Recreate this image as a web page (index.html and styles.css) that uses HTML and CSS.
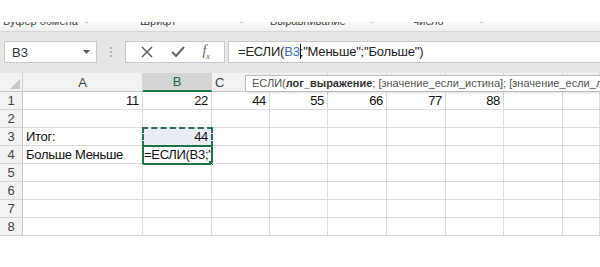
FILE: index.html
```html
<!DOCTYPE html>
<html lang="ru">
<head>
  <meta charset="UTF-8">
  <title>ЕСЛИ</title>
  <link rel="stylesheet" href="styles.css">
</head>
<body>
  <div class="top-gap"></div>

  <div class="group-labels">
    <span class="glabel g1">Буфер обмена</span><span class="launch l1">&#8600;</span>
    <span class="glabel g2">Шрифт</span><span class="launch l2">&#8600;</span>
    <span class="glabel g3">Выравнивание</span><span class="launch l3">&#8600;</span>
    <span class="glabel g4">Число</span><span class="launch l4">&#8600;</span>
  </div>

  <div class="formula-area">
    <div class="name-box">
      <span>B3</span>
      <svg class="dd" width="7" height="4" viewBox="0 0 7 4"><path d="M0 0h7L3.5 4z" fill="#555"/></svg>
    </div>
    <div class="grip"><i></i><i></i><i></i></div>
    <div class="fx-buttons">
      <svg width="14" height="14" viewBox="0 0 14 14"><path d="M2 2l10 10M12 2L2 12" stroke="#666" stroke-width="1.6"/></svg>
      <svg width="16" height="14" viewBox="0 0 16 14"><path d="M2 7l4 4 8-9" stroke="#666" stroke-width="2" fill="none"/></svg>
      <span class="fx">f<sub>x</sub></span>
    </div>
    <div class="formula-input">
      =ЕСЛИ(<span class="ref">B3</span><span class="caret"></span>;"Меньше";"Больше")
    </div>
  </div>

  <div class="sheet">
    <div class="grid">
      <div class="hd corner"><svg width="10" height="10" viewBox="0 0 10 10"><path d="M10 0v10H0z" fill="#c8c8c8"/></svg></div>
      <div class="hd">A</div>
      <div class="hd sel">B</div>
      <div class="hd hd-c">C</div>
      <!-- D..I headers sit under the tooltip -->
      <div class="hd"></div>
      <div class="hd"></div>
      <div class="hd"></div>
      <div class="hd"></div>
      <div class="hd"></div>
      <div class="hd"></div>

      <div class="rh">1</div>
      <div class="c num">11</div><div class="c num">22</div><div class="c num">44</div><div class="c num">55</div>
      <div class="c num">66</div><div class="c num">77</div><div class="c num">88</div><div class="c"></div><div class="c"></div>

      <div class="rh">2</div>
      <div class="c"></div><div class="c"></div><div class="c"></div><div class="c"></div>
      <div class="c"></div><div class="c"></div><div class="c"></div><div class="c"></div><div class="c"></div>

      <div class="rh">3</div>
      <div class="c">Итог:</div><div class="c num copied">44</div><div class="c"></div><div class="c"></div>
      <div class="c"></div><div class="c"></div><div class="c"></div><div class="c"></div><div class="c"></div>

      <div class="rh">4</div>
      <div class="c">Больше Меньше</div><div class="c editing">=ЕСЛИ(B3;"</div><div class="c"></div><div class="c"></div>
      <div class="c"></div><div class="c"></div><div class="c"></div><div class="c"></div><div class="c"></div>

      <div class="rh">5</div>
      <div class="c"></div><div class="c"></div><div class="c"></div><div class="c"></div>
      <div class="c"></div><div class="c"></div><div class="c"></div><div class="c"></div><div class="c"></div>

      <div class="rh">6</div>
      <div class="c"></div><div class="c"></div><div class="c"></div><div class="c"></div>
      <div class="c"></div><div class="c"></div><div class="c"></div><div class="c"></div><div class="c"></div>

      <div class="rh">7</div>
      <div class="c"></div><div class="c"></div><div class="c"></div><div class="c"></div>
      <div class="c"></div><div class="c"></div><div class="c"></div><div class="c"></div><div class="c"></div>

      <div class="rh">8</div>
      <div class="c"></div><div class="c"></div><div class="c"></div><div class="c"></div>
      <div class="c"></div><div class="c"></div><div class="c"></div><div class="c"></div><div class="c"></div>
    </div>

    <div class="tooltip">ЕСЛИ(<b>лог_выражение</b>; [значение_если_истина]; [значение_если_ложь])</div>
  </div>
</body>
</html>
```

FILE: styles.css
```css
* {
  box-sizing: border-box;
}
body {
  margin: 0;
  width: 600px;
  height: 267px;
  overflow: hidden;
  background: #fff;
  font-family: "Liberation Sans", Arial, sans-serif;
  color: #222;
}
.top-gap {
  height: 22px;
  background: #fff;
}
.group-labels {
  position: relative;
  height: 10px;
  overflow: hidden;
  background: linear-gradient(#fafafa, #efefef);
  border-bottom: 1px solid #d6d6d6;
  font-size: 11px;
  color: #444;
}
.glabel,
.launch {
  position: absolute;
  top: -7px;
  line-height: 12px;
}
.launch {
  font-size: 8px;
  color: #aaa;
}
.g1 { left: 3px; }
.l1 { left: 82px; }
.g2 { left: 140px; }
.l2 { left: 237px; }
.g3 { left: 270px; }
.l3 { left: 367px; }
.g4 { left: 412px; }
.l4 { left: 477px; }

.formula-area {
  display: flex;
  align-items: center;
  height: 41px;
  padding: 9px 0 10px 4px;
  background: #e6e6e6;
}
.name-box {
  display: flex;
  align-items: center;
  justify-content: space-between;
  width: 93px;
  height: 22px;
  padding: 0 6px 0 7px;
  background: #fff;
  border: 1px solid #c8c8c8;
  font-size: 13px;
  color: #333;
}
.grip {
  display: flex;
  flex-direction: column;
  gap: 2px;
  width: 28px;
  align-items: center;
}
.grip i {
  width: 2px;
  height: 2px;
  background: #b4b4b4;
}
.fx-buttons {
  display: flex;
  align-items: center;
  justify-content: space-around;
  width: 100px;
  height: 22px;
  padding: 0 6px;
  background: #fff;
  border: 1px solid #c8c8c8;
}
.fx {
  font-family: "Liberation Serif", serif;
  font-style: italic;
  font-size: 14px;
  color: #666;
}
.fx sub {
  font-size: 8px;
}
.formula-input {
  flex: 1;
  height: 22px;
  margin-left: 3px;
  padding-left: 9px;
  background: #fff;
  border: 1px solid #c8c8c8;
  border-right: none;
  font-size: 13px;
  letter-spacing: -0.2px;
  line-height: 20px;
  color: #222;
  white-space: nowrap;
}
.ref {
  color: #3a6ec0;
}
.caret {
  display: inline-block;
  width: 1px;
  height: 15px;
  margin: 0 -1px 0 0;
  vertical-align: -3px;
  background: #111;
}

.sheet {
  position: relative;
}
.grid {
  display: grid;
  grid-template-columns: 23px 120px 69px 58px 58px 59px 59px 58px 59px 1fr;
  grid-template-rows: 19px repeat(8, 18px);
}
.hd {
  display: flex;
  align-items: center;
  justify-content: center;
  background: #f2f2f2;
  border-right: 1px solid #d4d4d4;
  border-bottom: 1px solid #c6c6c6;
  font-size: 13px;
  color: #444;
}
.hd.corner {
  justify-content: flex-end;
  align-items: flex-end;
  padding: 0 2px 2px 0;
}
.hd.sel {
  background: #d4d4d4;
  border-bottom: 2px solid #217346;
  color: #216a43;
}
.hd-c {
  justify-content: flex-start;
  padding-left: 3px;
}
.rh {
  display: flex;
  align-items: center;
  justify-content: center;
  background: #f2f2f2;
  border-right: 1px solid #c6c6c6;
  border-bottom: 1px solid #d4d4d4;
  font-size: 13px;
  color: #444;
}
.c {
  position: relative;
  padding: 0 3px;
  border-right: 1px solid #dadada;
  border-bottom: 1px solid #dadada;
  font-size: 13px;
  letter-spacing: -0.3px;
  line-height: 17px;
  color: #111;
  white-space: nowrap;
}
.num {
  text-align: right;
}
.copied {
  background: #e9edf3;
  outline: 2px dashed #2e6a5c;
  outline-offset: -1px;
}
.editing {
  padding-left: 1px;
  overflow: hidden;
  outline: 2px solid #217346;
  outline-offset: -1px;
}
.editing::after {
  content: "";
  position: absolute;
  right: -2px;
  bottom: -2px;
  width: 4px;
  height: 4px;
  background: #217346;
}
.tooltip {
  position: absolute;
  top: 2px;
  left: 245px;
  width: 400px;
  height: 17px;
  padding-left: 6px;
  background: #fff;
  border: 1px solid #bcbcbc;
  font-size: 11px;
  line-height: 15px;
  color: #555;
  white-space: nowrap;
  box-shadow: 1px 1px 2px rgba(0, 0, 0, 0.12);
}
.tooltip b {
  color: #333;
}
```
